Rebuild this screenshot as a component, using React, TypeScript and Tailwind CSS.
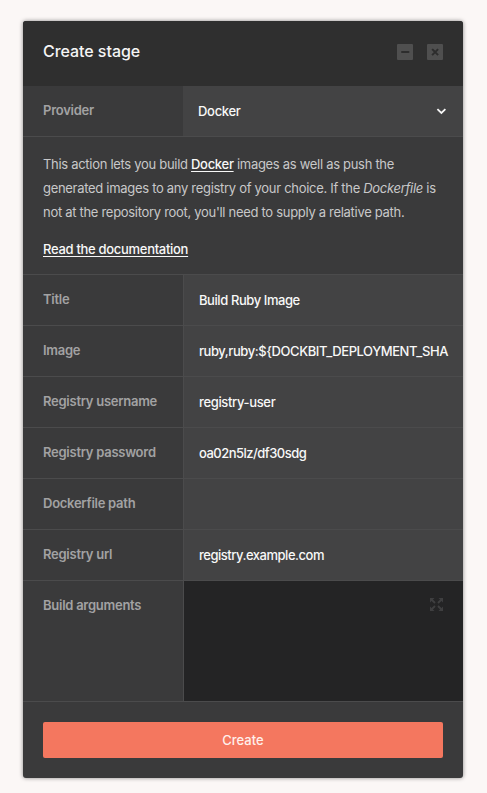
import React from "react";

type Field = { label: string; value: string; tracking: string };

const fields: Field[] = [
  { label: "Title", value: "Build Ruby Image", tracking: "tracking-[-0.42px]" },
  { label: "Image", value: "ruby,ruby:${DOCKBIT_DEPLOYMENT_SHA", tracking: "tracking-[-0.43px]" },
  { label: "Registry username", value: "registry-user", tracking: "tracking-[-0.35px]" },
  { label: "Registry password", value: "oa02n5lz/df30sdg", tracking: "tracking-[-0.52px]" },
  { label: "Dockerfile path", value: "", tracking: "tracking-normal" },
  { label: "Registry url", value: "registry.example.com", tracking: "tracking-[-0.48px]" },
];

function Label({ children }: { children: React.ReactNode }) {
  return (
    <div className="w-[160px] shrink-0 whitespace-nowrap pl-5 pt-[14px] text-[13px] font-semibold leading-5 tracking-[-0.26px] text-[#a2a2a3]">
      {children}
    </div>
  );
}

export default function App() {
  return (
    <main className="h-[793px] w-[487px] overflow-hidden bg-[#fbf7f6] pl-[23px] pt-[21px] font-['Inter','Liberation_Sans',sans-serif]">
      <section className="flex h-[757px] w-[440px] flex-col overflow-hidden rounded-[3px] bg-[#3a3a3b] shadow-[0_0_4px_rgba(0,0,0,0.45)]">
        <header className="flex h-[65px] shrink-0 items-center justify-between bg-[#2f2f2f] pl-5 pr-5">
          <h1 className="pb-[5px] text-[16px] font-medium leading-6 tracking-[-0.05px] text-[#f5f5f5]">Create stage</h1>
          <div className="flex gap-[14px] pb-[3px]">
            <button aria-label="Minimize" className="h-4 w-4 rounded-[1px] bg-[#4f4f4f]">
              <svg viewBox="0 0 16 16" className="h-4 w-4">
                <path d="M5 8h6.5" stroke="#2d2d2d" strokeWidth="2" strokeLinecap="round" />
              </svg>
            </button>
            <button aria-label="Close" className="h-4 w-4 rounded-[1px] bg-[#4f4f4f]">
              <svg viewBox="0 0 16 16" className="h-4 w-4">
                <path d="M5.8 5.8l4.6 4.6M10.4 5.8l-4.6 4.6" stroke="#2d2d2d" strokeWidth="2" strokeLinecap="square" />
              </svg>
            </button>
          </div>
        </header>

        <div className="flex h-[51px] shrink-0 border-b border-[#4b4b4c]">
          <Label>Provider</Label>
          <div className="flex flex-1 items-center justify-between bg-[#434344] pl-[15px] pr-[17px] text-[13px] font-medium tracking-[-0.3px] text-[#f8f8f8]">
            <span className="pt-[2px]">Docker</span>
            <svg viewBox="0 0 10 8" className="mb-[1px] h-2 w-[10px]" fill="none">
              <path d="M1.4 2.2L5.4 6 9.4 2.2" stroke="#f5f5f5" strokeWidth="1.8" />
            </svg>
          </div>
        </div>

        <div className="h-[138px] shrink-0 whitespace-nowrap border-b border-[#4b4b4c] pl-5 pt-[15px] text-[13px] leading-6 tracking-[-0.3px] text-[#c8c8c9]">
          <p>
            <span className="block">
              This action lets you build{" "}
              <a className="font-medium text-[#f8f8f8] underline underline-offset-2">Docker</a> images as well as push the
            </span>
            <span className="block">
              generated images to any registry of your choice. If the <em>Dockerfile</em> is
            </span>
            <span className="block">not at the repository root, you'll need to supply a relative path.</span>
          </p>
          <a className="mt-[13px] block font-medium text-[#f8f8f8] underline underline-offset-2">Read the documentation</a>
        </div>

        {fields.map((field) => (
          <div key={field.label} className="flex h-[51px] shrink-0 border-b border-[#4b4b4c]">
            <Label>{field.label}</Label>
            <div className="flex-1 overflow-hidden whitespace-nowrap border-l border-[#4b4b4c] bg-[#434344] px-[15px] pt-[15px] text-[13px] font-medium leading-5 text-[#f8f8f8]">
              <span className={field.tracking}>{field.value}</span>
            </div>
          </div>
        ))}

        <div className="flex h-[121px] shrink-0 border-b border-[#4b4b4c]">
          <Label>Build arguments</Label>
          <div className="flex flex-1 justify-end border-l border-[#4b4b4c] bg-[#242425] pr-5 pt-[17px]">
            <svg viewBox="0 0 13 13" className="h-[13px] w-[13px]" fill="#3f3f40" stroke="#3f3f40">
              <path stroke="none" d="M0 0h4.5L0 4.5zM13 0v4.5L8.5 0zM0 13V8.5L4.5 13zM13 13H8.5L13 8.5z" />
              <path strokeWidth="1.8" d="M1.5 1.5L5 5M11.5 1.5L8 5M1.5 11.5L5 8M11.5 11.5L8 8" />
            </svg>
          </div>
        </div>

        <footer className="px-5 pt-5">
          <button className="block h-9 w-full rounded-[2px] bg-[#f4775f] pt-[2px] text-[13px] font-medium text-[#fff0ec]">Create</button>
        </footer>
      </section>
    </main>
  );
}
